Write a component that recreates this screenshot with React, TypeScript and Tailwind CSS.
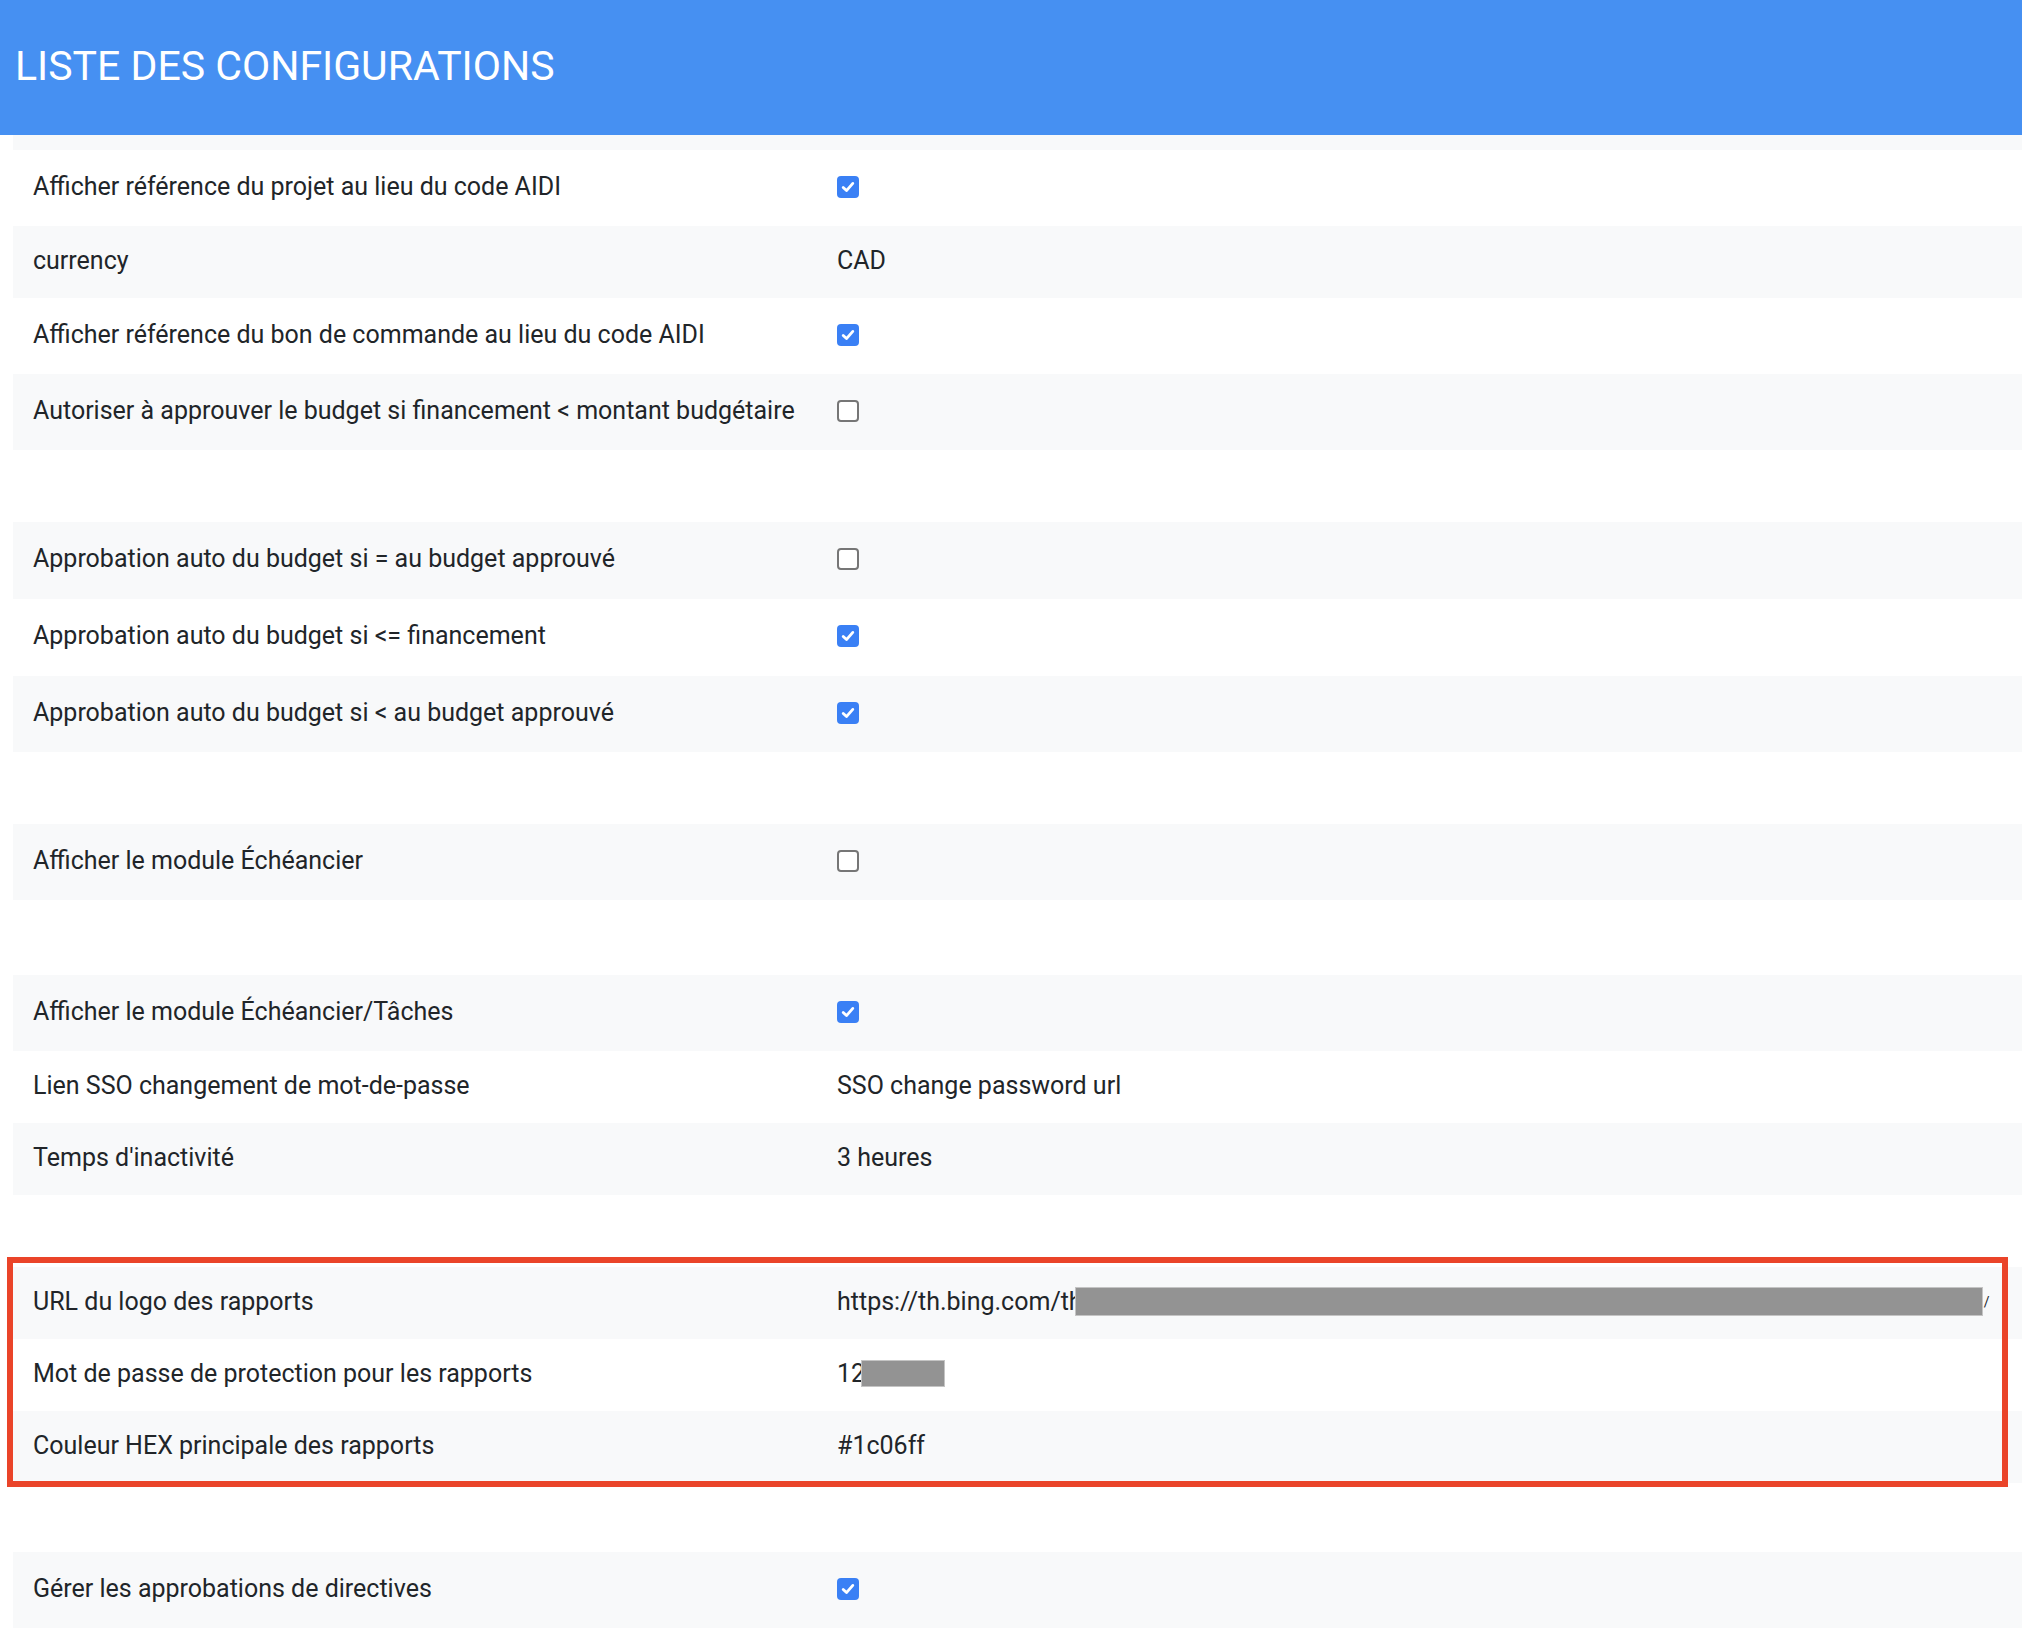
import React from "react";

type Row =
  | { kind: "check"; label: string; checked: boolean; h?: string }
  | { kind: "text"; label: string; value: React.ReactNode }
  | { kind: "gap"; h?: string };

function Checkbox({ checked }: { checked: boolean }) {
  if (!checked) {
    return (
      <span className="inline-block w-[22px] h-[22px] rounded-[4px] border-2 border-[#767676] bg-white" />
    );
  }
  return (
    <span className="inline-flex items-center justify-center w-[22px] h-[22px] rounded-[4px] bg-[#3a80f5]">
      <svg width="16" height="16" viewBox="0 0 16 16" fill="none">
        <path
          d="M3.2 8.4 6.5 11.6 12.8 4.4"
          stroke="white"
          strokeWidth="2.8"
          strokeLinecap="round"
          strokeLinejoin="round"
        />
      </svg>
    </span>
  );
}

const rows: Row[] = [
  { kind: "check", label: "Afficher référence du projet au lieu du code AIDI", checked: true },
  { kind: "text", label: "currency", value: "CAD" },
  { kind: "check", label: "Afficher référence du bon de commande au lieu du code AIDI", checked: true },
  { kind: "check", label: "Autoriser à approuver le budget si financement < montant budgétaire", checked: false },
  { kind: "gap" },
  { kind: "check", label: "Approbation auto du budget si = au budget approuvé", checked: false, h: "h-[77px]" },
  { kind: "check", label: "Approbation auto du budget si <= financement", checked: true, h: "h-[77px]" },
  { kind: "check", label: "Approbation auto du budget si < au budget approuvé", checked: true },
  { kind: "gap" },
  { kind: "check", label: "Afficher le module Échéancier", checked: false },
  { kind: "gap", h: "h-[75px]" },
  { kind: "check", label: "Afficher le module Échéancier/Tâches", checked: true },
  { kind: "text", label: "Lien SSO changement de mot-de-passe", value: "SSO change password url" },
  { kind: "text", label: "Temps d'inactivité", value: "3 heures" },
  { kind: "gap" },
  {
    kind: "text",
    label: "URL du logo des rapports",
    value: (
      <span className="inline-flex items-center">
        https://th.bing.com/th
        <span className="inline-block ml-[-8px] w-[908px] h-[29px] bg-[#939393] border border-[#c4c4c4]" />
        <span className="ml-[1px] text-[14px] leading-none">/</span>
      </span>
    ),
  },
  {
    kind: "text",
    label: "Mot de passe de protection pour les rapports",
    value: (
      <span className="inline-flex items-center">
        12
        <span className="inline-block ml-[-4px] w-[84px] h-[27px] bg-[#939393] border border-[#c4c4c4]" />
      </span>
    ),
  },
  { kind: "text", label: "Couleur HEX principale des rapports", value: "#1c06ff" },
  { kind: "gap", h: "h-[69px]" },
  { kind: "check", label: "Gérer les approbations de directives", checked: true },
];

export default function App() {
  return (
    <div
      className="relative min-h-screen bg-white text-[#212529]"
      style={{ fontFamily: "Roboto, 'Noto Sans', sans-serif" }}
    >
      <div className="h-[135px] bg-[#4690f2] flex items-center pl-[15px]">
        <h1 className="text-white text-[41px] font-normal pb-[2px]">
          LISTE DES CONFIGURATIONS
        </h1>
      </div>

      <div className="ml-[13px] flex flex-col">
        <div className="h-[15px] bg-[#f8f9fa]" />
        {rows.map((row, i) => {
          const striped = i % 2 === 1 ? "bg-[#f8f9fa]" : "bg-white";
          if (row.kind === "gap") {
            return <div key={i} className={`${row.h ?? "h-[72px]"} ${striped}`} />;
          }
          const h = row.kind === "check" ? row.h ?? "h-[76px]" : "h-[72px]";
          return (
            <div
              key={i}
              className={`flex items-center text-[25px] ${striped} ${h}`}
            >
              <div className="w-[824px] pl-[20px] shrink-0 pb-[3px]">{row.label}</div>
              <div className="flex items-center pb-[3px]">
                {row.kind === "check" ? <Checkbox checked={row.checked} /> : row.value}
              </div>
            </div>
          );
        })}
      </div>

      <div className="absolute left-[7px] top-[1257px] w-[2001px] h-[230px] border-[6px] border-[#ea4429] pointer-events-none" />
    </div>
  );
}
